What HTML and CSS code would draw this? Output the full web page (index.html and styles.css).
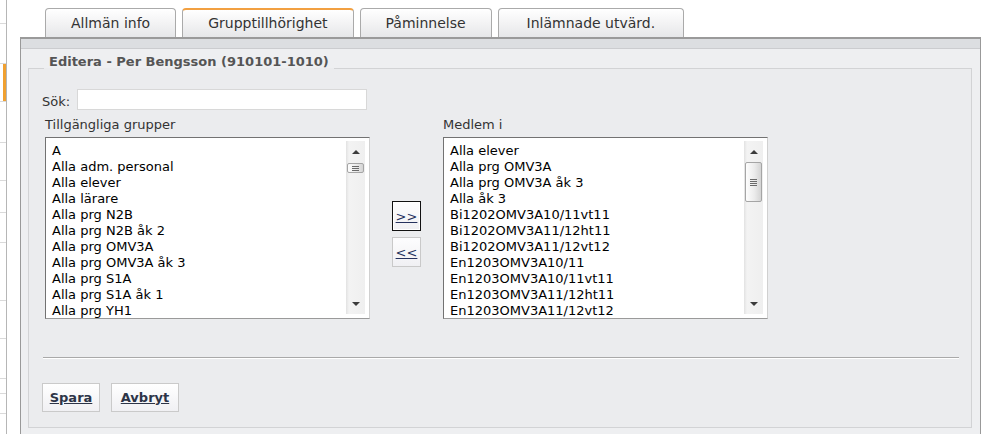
FILE: index.html
```html
<!DOCTYPE html>
<html lang="sv">
<head>
<meta charset="utf-8">
<title>Editera - Grupptillhörighet</title>
<link rel="stylesheet" href="styles.css">
</head>
<body>
<div class="page">
  <aside class="sidebar">
    <div class="sb-row"></div>
    <div class="sb-row"></div>
    <div class="sb-row current"></div>
    <div class="sb-row"></div>
    <div class="sb-row"></div>
    <div class="sb-row"></div>
    <div class="sb-row"></div>
    <div class="sb-row"></div>
    <div class="sb-row"></div>
    <div class="sb-row"></div>
    <div class="sb-row"></div>
    <div class="sb-row"></div>
  </aside>
  <main class="main">
    <nav class="tabs">
      <div class="tab">Allmän info</div>
      <div class="tab active">Grupptillhörighet</div>
      <div class="tab">Påminnelse</div>
      <div class="tab wide">Inlämnade utvärd.</div>
    </nav>
    <section class="panel">
      <div class="band"></div>
      <fieldset class="editor">
        <legend>Editera - Per Bengsson (910101-1010)</legend>
        <div class="search">
          <label class="search-label" for="q">Sök:</label>
          <input class="search-input" id="q" type="text">
        </div>
        <div class="columns">
          <div class="col">
            <div class="col-label">Tillgängliga grupper</div>
            <div class="listbox">
              <ul class="items">
                <li>A</li>
                <li>Alla adm. personal</li>
                <li>Alla elever</li>
                <li>Alla lärare</li>
                <li>Alla prg N2B</li>
                <li>Alla prg N2B åk 2</li>
                <li>Alla prg OMV3A</li>
                <li>Alla prg OMV3A åk 3</li>
                <li>Alla prg S1A</li>
                <li>Alla prg S1A åk 1</li>
                <li>Alla prg YH1</li>
              </ul>
              <div class="scrollbar">
                <div class="sb-btn up"></div>
                <div class="thumb short"><span class="grip"></span></div>
                <div class="sb-fill"></div>
                <div class="sb-btn down"></div>
              </div>
            </div>
          </div>
          <div class="movers">
            <button class="mover focused" type="button">&gt;&gt;</button>
            <button class="mover" type="button">&lt;&lt;</button>
          </div>
          <div class="col">
            <div class="col-label">Medlem i</div>
            <div class="listbox">
              <ul class="items">
                <li>Alla elever</li>
                <li>Alla prg OMV3A</li>
                <li>Alla prg OMV3A åk 3</li>
                <li>Alla åk 3</li>
                <li>Bi1202OMV3A10/11vt11</li>
                <li>Bi1202OMV3A11/12ht11</li>
                <li>Bi1202OMV3A11/12vt12</li>
                <li>En1203OMV3A10/11</li>
                <li>En1203OMV3A10/11vt11</li>
                <li>En1203OMV3A11/12ht11</li>
                <li>En1203OMV3A11/12vt12</li>
              </ul>
              <div class="scrollbar">
                <div class="sb-btn up"></div>
                <div class="thumb long"><span class="grip"></span></div>
                <div class="sb-fill"></div>
                <div class="sb-btn down"></div>
              </div>
            </div>
          </div>
        </div>
        <hr class="divider">
        <div class="actions">
          <button class="btn save" type="button">Spara</button>
          <button class="btn cancel" type="button">Avbryt</button>
        </div>
      </fieldset>
    </section>
  </main>
</div>
</body>
</html>
```
FILE: styles.css
```css
html, body {
  margin: 0;
  padding: 0;
  background: #fff;
  font-family: "DejaVu Sans", Verdana, sans-serif;
}

.page {
  display: flex;
  height: 434px;
  overflow: hidden;
}

/* left navigation strip */
.sidebar {
  width: 6px;
  flex: none;
  border-right: 1px solid #b6b6b6;
  display: flex;
  flex-direction: column;
}
.sb-row {
  flex: none;
  border-bottom: 1px solid #dadada;
}
.sb-row:nth-child(1) { height: 23px; }
.sb-row:nth-child(2) { height: 39px; }
.sb-row:nth-child(3) { height: 37px; }
.sb-row:nth-child(4) { height: 40px; }
.sb-row:nth-child(5) { height: 37px; }
.sb-row:nth-child(6) { height: 31px; }
.sb-row:nth-child(7) { height: 29px; }
.sb-row:nth-child(8) { height: 57px; }
.sb-row:nth-child(9) { height: 37px; }
.sb-row:nth-child(10) { height: 39px; }
.sb-row:nth-child(11) { height: 14px; }
.sb-row:nth-child(12) { height: 19px; }
.sb-row.current { box-shadow: inset -3px 0 0 #f0a030; }

.main {
  flex: 1;
  margin-left: 13px;
  display: flex;
  flex-direction: column;
  min-width: 0;
}

/* tabs */
.tabs {
  display: flex;
  gap: 6px;
  padding: 8px 0 0 25px;
}
.tab {
  height: 28px;
  line-height: 28px;
  padding: 0 25px;
  border: 1px solid #aaa;
  border-bottom: 0;
  border-radius: 4px 4px 0 0;
  background: linear-gradient(#ffffff, #f3f3f4 50%, #e6e7e9);
  font-size: 14px;
  color: #333;
  white-space: nowrap;
}
.tab.active {
  border-top: 2px solid #f2a041;
  height: 27px;
  line-height: 27px;
}
.tab.wide { padding: 0 28px; }

/* panel */
.panel {
  flex: 1;
  border: 1px solid #999;
  border-top: 2px solid #9a9a9a;
  border-bottom: 0;
  background: #eeeff1;
}
.band {
  height: 9px;
  background: #dcdee1;
  border-bottom: 1px solid #cbcccf;
}

.editor {
  margin: 5px 8px 0 7px;
  padding: 7px 0 15px 13px;
  border: 1px solid #d2d3d5;
  background: #ebecee;
  min-width: 0;
}
.editor legend {
  margin-left: 2px;
  padding: 0 5px 12px;
  font-size: 13px;
  line-height: 16px;
  font-weight: bold;
  color: #555;
}

/* search */
.search {
  display: flex;
  align-items: center;
  height: 21px;
}
.search-label {
  width: 35px;
  margin-top: 4px;
  font-size: 13px;
  color: #333;
}
.search-input {
  box-sizing: border-box;
  width: 290px;
  height: 21px;
  margin: 0;
  padding: 0 3px;
  border: 1px solid #d8d8d8;
  background: #fff;
  font: 13px "DejaVu Sans", Verdana, sans-serif;
}

/* lists */
.columns {
  display: flex;
  gap: 22px;
  margin: 7px 0 0 3px;
}
.col {
  width: 325px;
  flex: none;
}
.col-label {
  font-size: 13px;
  line-height: 16px;
  color: #333;
  margin-bottom: 4px;
}
.listbox {
  box-sizing: border-box;
  height: 182px;
  display: flex;
  padding: 3px 4px 0 6px;
  background: #fff;
  border: 1px solid;
  border-color: #727272 #d0d0d0 #9a9a9a #727272;
  overflow: hidden;
}
.items {
  flex: 1;
  margin: 0;
  padding: 2px 0 0;
  list-style: none;
  font-size: 13px;
  line-height: 16px;
  color: #000;
  white-space: nowrap;
}

.scrollbar {
  width: 19px;
  flex: none;
  margin-bottom: 4px;
  display: flex;
  flex-direction: column;
  background: linear-gradient(to right, #e2e2e2, #f3f3f3 3px, #efefef);
}
.sb-btn {
  height: 21px;
  flex: none;
  display: flex;
  align-items: center;
  justify-content: center;
}
.sb-btn.up::before {
  content: "";
  border-left: 4px solid transparent;
  border-right: 4px solid transparent;
  border-bottom: 4px solid #3c3c3c;
}
.sb-btn.down::before {
  content: "";
  border-left: 4px solid transparent;
  border-right: 4px solid transparent;
  border-top: 4px solid #3c3c3c;
}
.sb-fill { flex: 1; }
.thumb {
  flex: none;
  box-sizing: border-box;
  margin: 0 1px;
  border: 1px solid #a5a5a5;
  border-radius: 2px;
  background: linear-gradient(to right, #fdfdfd, #ececec 55%, #d4d4d4);
  display: flex;
  align-items: center;
  justify-content: center;
}
.thumb.short { height: 10px; margin-top: 1px; }
.thumb.long { height: 40px; }
.grip {
  width: 7px;
  background: repeating-linear-gradient(#6a6a6a 0 1px, transparent 1px 2px);
}
.thumb.short .grip { height: 5px; }
.thumb.long .grip { height: 7px; }

/* move buttons */
.movers {
  width: 29px;
  flex: none;
  display: flex;
  flex-direction: column;
  gap: 6px;
  padding-top: 84px;
}
.mover {
  box-sizing: border-box;
  width: 29px;
  height: 30px;
  margin: 0;
  padding: 0;
  border: 1px solid #c9c9c9;
  background: linear-gradient(#fdfdfe, #f0f0f3);
  font: 13px "DejaVu Sans", Verdana, sans-serif;
  color: #25325e;
  text-decoration: underline;
}
.mover.focused {
  border: 1px solid #111;
  box-shadow: inset 0 0 0 1px #fff;
}

.divider {
  height: 0;
  margin: 38px 12px 0 1px;
  border: 0;
  border-top: 1px solid #a9a9a9;
  border-bottom: 1px solid #fff;
}

.actions {
  display: flex;
  gap: 11px;
  margin-top: 24px;
}
.btn {
  box-sizing: border-box;
  height: 29px;
  margin: 0;
  padding: 0;
  border: 1px solid #cacaca;
  background: linear-gradient(#ffffff, #f0f0f3);
  font: bold 13px "DejaVu Sans", Verdana, sans-serif;
  color: #2c3447;
  text-decoration: underline;
}
.btn.save { width: 58px; }
.btn.cancel { width: 68px; }
```
